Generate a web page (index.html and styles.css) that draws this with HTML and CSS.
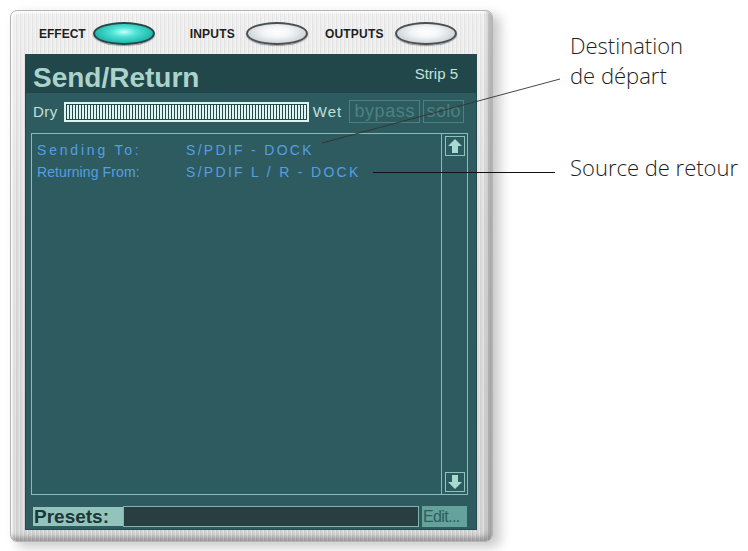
FILE: index.html
```html
<!DOCTYPE html>
<html lang="fr">
<head>
<meta charset="utf-8">
<title>Send/Return</title>
<link rel="stylesheet" href="styles.css">
</head>
<body>
<div class="page">
  <div class="device">
    <div class="topbar">
      <span class="tlabel">EFFECT</span><span class="oval on gap-a"></span>
      <span class="tlabel wide">INPUTS</span><span class="oval gap-b"></span>
      <span class="tlabel wide">OUTPUTS</span><span class="oval"></span>
    </div>
    <div class="panel">
      <div class="titlebar">
        <span class="title">Send/Return</span>
        <span class="strip">Strip 5</span>
      </div>
      <div class="mixrow">
        <span class="mixlbl">Dry</span>
        <div class="slider"></div>
        <span class="mixlbl wet">Wet</span>
        <span class="tbtn bypass">bypass</span>
        <span class="tbtn solo">solo</span>
      </div>
      <div class="listbox">
        <div class="list">
          <div class="row"><span class="lbl send">Sending To:</span><span class="val">S/PDIF - DOCK</span></div>
          <div class="row"><span class="lbl ret">Returning From:</span><span class="val">S/PDIF L / R - DOCK</span></div>
        </div>
        <div class="scroll">
          <svg class="arrow" width="22" height="22" viewBox="0 0 22 22"><rect x="1.5" y="1.5" width="19" height="19" fill="none" stroke="#8cc4bc" stroke-width="1"/><polygon points="11,4 18,11 14,11 14,18 8,18 8,11 4,11" fill="#a9d9d1"/></svg>
          <svg class="arrow" width="22" height="22" viewBox="0 0 22 22"><rect x="1.5" y="1.5" width="19" height="19" fill="none" stroke="#8cc4bc" stroke-width="1"/><polygon points="11,18 18,11 14,11 14,4 8,4 8,11 4,11" fill="#a9d9d1"/></svg>
        </div>
      </div>
      <div class="presets">
        <span class="plabel">Presets:</span>
        <span class="pfield"></span>
        <span class="edit">Edit...</span>
      </div>
    </div>
  </div>
  <div class="notes">
    <p class="note">Destination<br>de départ</p>
    <p class="note lower">Source de retour</p>
  </div>
  <svg class="leaders" width="748" height="551" viewBox="0 0 748 551">
    <line x1="322" y1="143" x2="560" y2="79" stroke="#333" stroke-width="0.9"/>
    <line x1="373" y1="172.5" x2="555" y2="172.5" stroke="#111" stroke-width="1"/>
  </svg>
</div>
</body>
</html>
```

FILE: styles.css
```css
html, body {
  margin: 0;
  padding: 0;
  background: #ffffff;
}

.page {
  position: relative;
  width: 748px;
  height: 551px;
  display: flex;
  align-items: flex-start;
  font-family: "Liberation Sans", Arial, sans-serif;
}

.device {
  margin: 10px 0 0 10px;
  width: 483px;
  height: 532px;
  box-sizing: border-box;
  padding: 0 16px 12px 15px;
  border-radius: 7px;
  border: 1px solid #b4b4b4;
  background:
    repeating-linear-gradient(90deg, rgba(255,255,255,0.35) 0 1px, rgba(0,0,0,0.045) 1px 2px, rgba(255,255,255,0) 2px 4px),
    linear-gradient(180deg, #efefef 0%, #dedede 40%, #d4d4d4 100%);
  box-shadow:
    inset -4px -4px 5px rgba(0,0,0,0.28),
    inset 2px 2px 2px rgba(255,255,255,0.9),
    7px 5px 12px rgba(0,0,0,0.22);
  display: flex;
  flex-direction: column;
}

.topbar {
  height: 44px;
  display: flex;
  align-items: center;
  padding-left: 13px;
  padding-top: 1px;
  box-sizing: border-box;
}

.tlabel {
  font-size: 12px;
  font-weight: 700;
  color: #1e1e1e;
  margin-right: 7px;
}

.tlabel.wide {
  margin-right: 11px;
  letter-spacing: 0.2px;
}

.oval {
  width: 62px;
  height: 23px;
  box-sizing: border-box;
  border-radius: 50%;
  border: 2px solid #4a4f52;
  background: radial-gradient(ellipse at 50% 42%, #ffffff 0%, #f2f5f7 35%, #cdd2d6 75%, #9aa1a6 100%);
  box-shadow: 0 1px 1px rgba(0,0,0,0.35);
}

.oval.on {
  border-color: #2a4546;
  background: radial-gradient(ellipse at 50% 42%, #c6fff8 0%, #4fe3d6 30%, #22b8ad 70%, #0f736c 100%);
}

.gap-a { margin-right: 35px; }
.gap-b { margin-right: 17px; }

.panel {
  flex: 1;
  background: #2e5b5f;
  display: flex;
  flex-direction: column;
  box-shadow: 0 0 0 1px #24484b;
}

.titlebar {
  height: 38px;
  box-sizing: border-box;
  background: #22474a;
  display: flex;
  align-items: flex-start;
  padding: 8px 18px 0 7px;
}

.title {
  font-size: 28px;
  font-weight: 700;
  line-height: 30px;
  color: #aad3cb;
}

.strip {
  margin-left: auto;
  margin-top: 3px;
  font-size: 15px;
  line-height: 15px;
  color: #c4e2dc;
}

.mixrow {
  margin-top: 7px;
  height: 23px;
  display: flex;
  align-items: center;
  padding-left: 7px;
}

.mixlbl {
  font-size: 15px;
  color: #c0e0da;
  margin-right: 6px;
  letter-spacing: 0.5px;
}

.mixlbl.wet {
  margin: 0 7px 0 4px;
  letter-spacing: 1px;
}

.slider {
  width: 245px;
  height: 20px;
  box-sizing: border-box;
  border: 2px solid #dcf2ec;
  padding: 1px;
  background:
    repeating-linear-gradient(90deg, #e0f4ef 0 2px, #23494c 2px 3px) content-box,
    #23494c;
}

.tbtn {
  height: 23px;
  box-sizing: border-box;
  border: 1px solid #4a837e;
  color: #4a837e;
  font-size: 18px;
  line-height: 20px;
  text-align: center;
  overflow: hidden;
}

.bypass { width: 71px; margin-right: 3px; letter-spacing: 0.6px; }
.solo { width: 41px; letter-spacing: 0.3px; }

.listbox {
  margin: 10px 8px 0 5px;
  height: 362px;
  box-sizing: border-box;
  border: 1px solid #86bdb5;
  display: flex;
}

.list {
  flex: 1;
  padding: 5px 0 0 5px;
}

.row {
  height: 22px;
  line-height: 22px;
  font-size: 14px;
  color: #549fe2;
  white-space: nowrap;
}

.lbl {
  display: inline-block;
  width: 149px;
}

.lbl.send { letter-spacing: 2.8px; }
.lbl.ret { letter-spacing: 0.1px; }

.val { letter-spacing: 2.3px; }

.scroll {
  width: 25px;
  border-left: 1px solid #86bdb5;
  display: flex;
  flex-direction: column;
  justify-content: space-between;
  align-items: center;
  padding: 1px 0;
}

.arrow {
  display: block;
}

.presets {
  margin-top: 10px;
  height: 22px;
  display: flex;
  align-items: center;
  padding: 0 9px 0 7px;
}

.plabel {
  width: 90px;
  height: 19px;
  box-sizing: border-box;
  background: #92c4bc;
  color: #1d3537;
  font-size: 19px;
  font-weight: 700;
  line-height: 19px;
  padding-left: 1px;
  white-space: nowrap;
}

.pfield {
  flex: 1;
  height: 21px;
  box-sizing: border-box;
  background: #283e40;
  border: 1px solid #80b5ad;
}

.edit {
  width: 45px;
  height: 21px;
  margin-left: 3px;
  box-sizing: border-box;
  background: #64a29b;
  color: #2a5f5e;
  font-size: 16px;
  line-height: 21px;
  padding-left: 1px;
  letter-spacing: -0.6px;
  white-space: nowrap;
  overflow: hidden;
}

.notes {
  margin-left: 77px;
  padding-top: 30px;
  font-family: "Open Sans", "Noto Sans", sans-serif;
  font-weight: 300;
  font-size: 22px;
  line-height: 30px;
  color: #1e1e1e;
  white-space: nowrap;
}

.note {
  margin: 0;
}

.note.lower {
  margin-top: 62px;
}

.leaders {
  position: absolute;
  left: 0;
  top: 0;
  pointer-events: none;
}
```
